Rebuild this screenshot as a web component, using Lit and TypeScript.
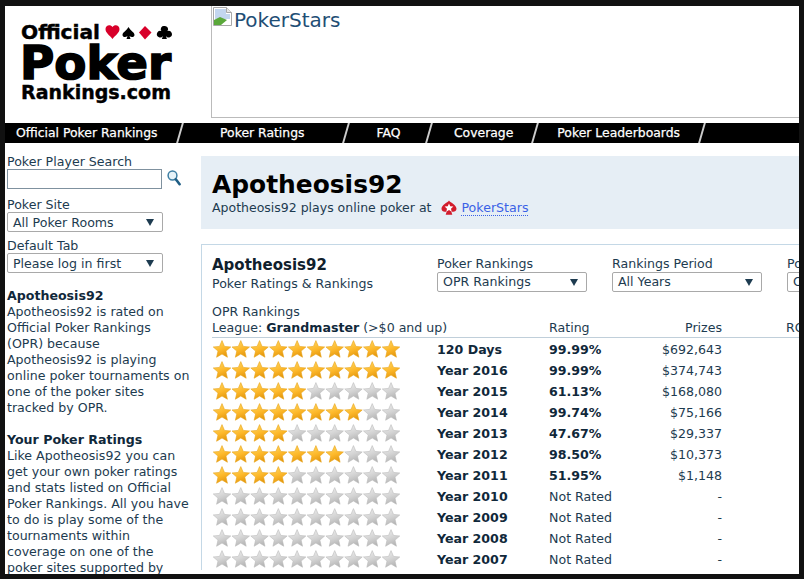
import { LitElement, html, svg, css } from "lit";
import { customElement } from "lit/decorators.js";

const rows = [
  { label: "120 Days", stars: 10, rating: "99.99%", prize: "$692,643" },
  { label: "Year 2016", stars: 10, rating: "99.99%", prize: "$374,743" },
  { label: "Year 2015", stars: 5, rating: "61.13%", prize: "$168,080" },
  { label: "Year 2014", stars: 8, rating: "99.74%", prize: "$75,166" },
  { label: "Year 2013", stars: 4, rating: "47.67%", prize: "$29,337" },
  { label: "Year 2012", stars: 7, rating: "98.50%", prize: "$10,373" },
  { label: "Year 2011", stars: 4, rating: "51.95%", prize: "$1,148" },
  { label: "Year 2010", stars: 0, rating: "Not Rated", prize: "-" },
  { label: "Year 2009", stars: 0, rating: "Not Rated", prize: "-" },
  { label: "Year 2008", stars: 0, rating: "Not Rated", prize: "-" },
  { label: "Year 2007", stars: 0, rating: "Not Rated", prize: "-" },
];

const starPoints = (cx: number, cy = 10.8, outer = 9.2, inner = 4.2) => {
  const pts: string[] = [];
  for (let i = 0; i < 10; i++) {
    const r = i % 2 ? inner : outer;
    const a = (Math.PI / 5) * i - Math.PI / 2;
    pts.push(`${(cx + r * Math.cos(a)).toFixed(2)},${(cy + r * Math.sin(a)).toFixed(2)}`);
  }
  return pts.join(" ");
};

@customElement("app-root")
export class AppRoot extends LitElement {
  static styles = css`
    :host {
      display: block;
      box-sizing: border-box;
      height: 579px;
      border-style: solid;
      border-color: #111;
      border-width: 6px 5px 5px 5px;
      overflow: hidden;
      background: #fff;
      font-family: "DejaVu Sans", sans-serif;
      font-size: 12.6px;
      line-height: 16px;
      color: #1d3b50;
    }
    .top { display: flex; height: 117px; }
    .logo { width: 206px; flex: none; }
    .logo svg { display: block; }
    .ad {
      flex: 1;
      height: 112px;
      box-sizing: border-box;
      border-left: 1px solid #bbb;
      border-bottom: 1px solid #bbb;
      display: flex;
      align-items: flex-start;
      padding-left: 1px;
      font-size: 20px;
      line-height: 28px;
      color: #1f4e75;
    }
    .ad svg { flex: none; margin: 1px 2px 0 0; }
    nav {
      display: flex;
      align-items: center;
      height: 20px;
      background: #000;
      color: #fff;
      font-size: 12.4px;
      -webkit-text-stroke: 0.25px #fff;
    }
    nav a { white-space: nowrap; padding: 0 21px 0 21px; }
    nav a.first { padding-left: 11px; padding-right: 21.5px; }
    nav a.ratings { padding: 0 41px 0 39px; }
    nav a.faq { padding: 0 28px 0 29px; }
    nav a.coverage { padding: 0 21px 0 23.5px; }
    .sep { width: 2px; height: 20px; background: #ccc; transform: skewX(-16deg); flex: none; }
    .body { display: flex; padding-top: 11px; }
    aside { width: 185px; flex: none; padding-left: 2px; margin-right: 9px; box-sizing: content-box; }
    .field-label { display: block; }
    .search { display: flex; align-items: center; gap: 5px; margin: -1px 0 8px; }
    .search-box {
      width: 155px;
      height: 20px;
      box-sizing: border-box;
      border: 1px solid #7f919f;
      background: #fff;
    }
    .search svg { position: relative; top: -1px; }
    .pick {
      display: flex;
      align-items: center;
      justify-content: space-between;
      box-sizing: border-box;
      height: 20px;
      padding: 0 8px 0 5px;
      border: 1px solid #a9a9a9;
      border-radius: 2px;
      background: #fff;
      white-space: nowrap;
      overflow: hidden;
    }
    .pick i {
      width: 0;
      height: 0;
      flex: none;
      border-left: 4px solid transparent;
      border-right: 4px solid transparent;
      border-top: 7px solid #1d3b50;
    }
    aside .pick { width: 156px; margin: -1px 0 6px; }
    aside .pick span { margin-top: 2px; }
    .note { margin: 15px 0 16px; white-space: nowrap; }
    b { color: #10283a; }
    main { flex: 1; min-width: 0; margin-top: 2px; }
    .banner { height: 73px; box-sizing: border-box; background: #e6eef5; padding: 14px 11px 0; }
    h1 { margin: 0; font-size: 24.9px; line-height: 30px; font-weight: 700; color: #000; }
    .sub { display: flex; align-items: center; }
    .sub span { font-size: 12.5px; }
    .sub svg { margin: 0 4px 0 10px; }
    .sub a { color: #3b62e6; border-bottom: 1px dotted #3b62e6; line-height: 15px; }
    .card {
      margin-top: 15px;
      border-left: 1px solid #c4d8e6;
      border-top: 1px solid #c4d8e6;
      padding: 11px 0 0 10px;
    }
    .head { display: flex; width: 640px; }
    .who { width: 225px; flex: none; }
    .who h2 { margin: 0; font-size: 15px; line-height: 18px; color: #10202c; }
    .who div { margin-top: 2px; }
    .filter { width: 150px; margin-right: 25px; flex: none; }
    .filter.cut { width: 100px; margin-right: 0; }
    .league-block { margin-top: 12px; }
    .col-head, .row { display: grid; grid-template-columns: 225px 112px 100px 73px 64px; align-items: center; white-space: nowrap; }
    .col-head { height: 16px; border-bottom: 1px solid #c0cfda; padding-bottom: 1px; margin-bottom: 1px; }
    .col-head .league { grid-column: 1 / span 2; }
    .col-head .roi { padding-left: 64px; }
    .num { text-align: right; }
    .row { height: 21px; }
    .row b { font-weight: 700; }
    .row svg { display: block; }
  `;

  private renderStars(count: number) {
    return html`<svg width="190" height="21" viewBox="0 0 190 21">
      <defs>
        <linearGradient id="gold" x1="0.2" y1="0" x2="0.6" y2="1">
          <stop offset="0" stop-color="#ffd863"></stop>
          <stop offset="0.55" stop-color="#fdb82a"></stop>
          <stop offset="1" stop-color="#e2950c"></stop>
        </linearGradient>
        <linearGradient id="grey" x1="0.2" y1="0" x2="0.6" y2="1">
          <stop offset="0" stop-color="#efefef"></stop>
          <stop offset="0.55" stop-color="#d2d2d2"></stop>
          <stop offset="1" stop-color="#b2b2b2"></stop>
        </linearGradient>
      </defs>
      ${Array.from({ length: 10 }, (_, i) =>
        svg`<polygon points=${starPoints(10 + i * 18.78)} fill=${i < count ? "url(#gold)" : "url(#grey)"}
          stroke=${i < count ? "#e8a317" : "#bbb"} stroke-width="0.6" stroke-linejoin="round"></polygon>`
      )}
    </svg>`;
  }

  private renderLogo() {
    return html`<svg width="206" height="117" viewBox="0 0 206 117">
      <g fill="#000" font-family="'DejaVu Sans', sans-serif" font-weight="700">
        <text x="16" y="33" font-size="19" textLength="79" lengthAdjust="spacingAndGlyphs" stroke="#000" stroke-width="0.4">Official</text>
        <text x="15" y="73" font-size="46" textLength="151" lengthAdjust="spacingAndGlyphs" stroke="#000" stroke-width="1.6">Poker</text>
        <text x="16" y="93" font-size="19" textLength="150" lengthAdjust="spacingAndGlyphs" stroke="#000" stroke-width="0.4">Rankings.com</text>
      </g>
      <path d="M107.500 21c-2-3-7-2-7 2 0 4 4 6 7 10 3-4 7-6 7-10 0-4-5-5-7-2z" fill="#d8002a"></path>
      <path d="M123.500 21c2 4 6 5 6 8 0 2-3 3-5 1l1 3h-4l1-3c-2 2-5 1-5-1 0-3 4-4 6-8z" fill="#000"></path>
      <path d="M140 20l6.500 6.500-6.500 7-6-7z" fill="#d8002a"></path>
      <path d="M159.500 20a3.200 3.200 0 0 1 3 5 3.300 3.300 0 1 1-1.600 5l1 3h-5l1-3a3.300 3.300 0 1 1-1.600-5 3.200 3.200 0 0 1 3.200-5z" fill="#000"></path>
    </svg>`;
  }

  render() {
    return html`
      <div class="top">
        <div class="logo">${this.renderLogo()}</div>
        <div class="ad">
          <svg width="19" height="19" viewBox="0 0 19 19">
            <path d="M.500.500h13l5 5v13H.500z" fill="#fff" stroke="#a8a8a8"></path>
            <path d="M13.500.500v5h5" fill="#e8e8e8" stroke="#a8a8a8"></path>
            <path d="M2 2h11v5h4v5H2z" fill="#c3d6ef"></path>
            <path d="M1 18v-5l6-3 7 3-6 5z" fill="#5aa83a"></path>
            <path d="M14 18h4v-5h-4z" fill="#fff"></path>
          </svg>
          <span>PokerStars</span>
        </div>
      </div>
      <nav>
        <a class="first">Official Poker Rankings</a><span class="sep"></span>
        <a class="ratings">Poker Ratings</a><span class="sep"></span>
        <a class="faq">FAQ</a><span class="sep"></span>
        <a class="coverage">Coverage</a><span class="sep"></span>
        <a>Poker Leaderboards</a><span class="sep"></span>
      </nav>
      <div class="body">
        <aside>
          <span class="field-label">Poker Player Search</span>
          <div class="search">
            <div class="search-box"></div>
            <svg width="14" height="16" viewBox="0 0 14 16">
              <circle cx="5.500" cy="5.500" r="4.400" fill="#e6f2f8" stroke="#3d7ea3" stroke-width="1.500"></circle>
              <path d="M8.800 9.300l3.800 4.900" stroke="#1f5e85" stroke-width="2.600" stroke-linecap="round"></path>
            </svg>
          </div>
          <span class="field-label">Poker Site</span>
          <div class="pick"><span>All Poker Rooms</span><i></i></div>
          <span class="field-label">Default Tab</span>
          <div class="pick"><span>Please log in first</span><i></i></div>
          <div class="note">
            <b>Apotheosis92</b><br />
            Apotheosis92 is rated on<br />
            Official Poker Rankings<br />
            (OPR) because<br />
            Apotheosis92 is playing<br />
            online poker tournaments on<br />
            one of the poker sites<br />
            tracked by OPR.
          </div>
          <div class="note">
            <b>Your Poker Ratings</b><br />
            Like Apotheosis92 you can<br />
            get your own poker ratings<br />
            and stats listed on Official<br />
            Poker Rankings. All you have<br />
            to do is play some of the<br />
            tournaments within<br />
            coverage on one of the<br />
            poker sites supported by
          </div>
        </aside>
        <main>
          <div class="banner">
            <h1>Apotheosis92</h1>
            <div class="sub">
              <span>Apotheosis92 plays online poker at</span>
              <svg width="16" height="16" viewBox="0 0 16 16">
                <path d="M8 .500c1.600 2.400 7.500 4.300 7.500 8.300 0 2.900-3.400 3.700-5.300 2.400l1.100 3.500H4.700l1.100-3.500C3.900 12.500.500 11.700.500 8.800.500 4.800 6.400 2.900 8 .500z" fill="#d21c2c"></path>
                <polygon points=${starPoints(8, 8, 4.600, 2.100)} fill="#fff"></polygon>
              </svg>
              <a>PokerStars</a>
            </div>
          </div>
          <div class="card">
            <div class="head">
              <div class="who">
                <h2>Apotheosis92</h2>
                <div>Poker Ratings &amp; Rankings</div>
              </div>
              <div class="filter"><span class="field-label">Poker Rankings</span><div class="pick"><span>OPR Rankings</span><i></i></div></div>
              <div class="filter"><span class="field-label">Rankings Period</span><div class="pick"><span>All Years</span><i></i></div></div>
              <div class="filter cut"><span class="field-label">Poker Site</span><div class="pick"><span>OPR</span><i></i></div></div>
            </div>
            <div class="league-block">
              <div>OPR Rankings</div>
              <div class="col-head">
                <span class="league">League: <b>Grandmaster</b> (&gt;$0 and up)</span>
                <span>Rating</span>
                <span class="num">Prizes</span>
                <span class="roi">ROI</span>
              </div>
              ${rows.map(
                (r) => html`<div class="row">
                  ${this.renderStars(r.stars)}
                  <b>${r.label}</b>
                  ${r.stars ? html`<b>${r.rating}</b>` : html`<span>${r.rating}</span>`}
                  <span class="num">${r.prize}</span>
                </div>`
              )}
            </div>
          </div>
        </main>
      </div>
    `;
  }
}
